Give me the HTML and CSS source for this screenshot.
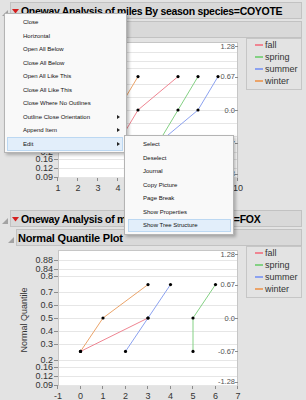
FILE: index.html
```html
<!DOCTYPE html>
<html lang="en">
<head>
    <meta charset="UTF-8">
    <title>Oneway Analysis</title>
    <link rel="stylesheet" href="styles.css">
</head>
<body>

    <div class="outline">
        <div class="outline-head">
            <svg class="disclose" width="6" height="6"><polygon points="6,0 6,6 0,6"/></svg>
            <div class="title-bar">
                <svg class="hot" width="7" height="5"><polygon points="0,0 7,0 3.5,4.5"/></svg>
                <span class="title">Oneway Analysis of miles By season species=COYOTE</span>
            </div>
        </div>
        <div class="outline-sub">
            <svg class="disclose" width="6" height="6"><polygon points="6,0 6,6 0,6"/></svg>
            <div class="title-bar sub-bar">
                <span class="title">Normal Quantile Plot</span>
            </div>
        </div>
        <div class="report">
            <svg class="chart" id="chartCoyote" width="240" height="170"></svg>
            <div class="legend">
                <div class="legend-item"><span class="swatch fall"></span>fall</div>
                <div class="legend-item"><span class="swatch spring"></span>spring</div>
                <div class="legend-item"><span class="swatch summer"></span>summer</div>
                <div class="legend-item"><span class="swatch winter"></span>winter</div>
            </div>
        </div>
    </div>

    <div class="outline">
        <div class="outline-head">
            <svg class="disclose" width="6" height="6"><polygon points="6,0 6,6 0,6"/></svg>
            <div class="title-bar">
                <svg class="hot" width="7" height="5"><polygon points="0,0 7,0 3.5,4.5"/></svg>
                <span class="title">Oneway Analysis of miles By season species=FOX</span>
            </div>
        </div>
        <div class="outline-sub">
            <svg class="disclose" width="6" height="6"><polygon points="6,0 6,6 0,6"/></svg>
            <div class="title-bar sub-bar">
                <span class="title">Normal Quantile Plot</span>
            </div>
        </div>
        <div class="report">
            <svg class="chart" id="chartFox" width="240" height="170"></svg>
            <div class="legend">
                <div class="legend-item"><span class="swatch fall"></span>fall</div>
                <div class="legend-item"><span class="swatch spring"></span>spring</div>
                <div class="legend-item"><span class="swatch summer"></span>summer</div>
                <div class="legend-item"><span class="swatch winter"></span>winter</div>
            </div>
        </div>
    </div>

    <!-- red triangle menu, opened on Edit -->
    <div class="menu main-menu">
        <div class="menu-item">Close</div>
        <div class="menu-item">Horizontal</div>
        <div class="menu-item">Open All Below</div>
        <div class="menu-item">Close All Below</div>
        <div class="menu-item">Open All Like This</div>
        <div class="menu-item">Close All Like This</div>
        <div class="menu-item">Close Where No Outlines</div>
        <div class="menu-item has-sub">Outline Close Orientation</div>
        <div class="menu-item has-sub">Append Item</div>
        <div class="menu-item has-sub active">Edit</div>
    </div>

    <div class="menu sub-menu">
        <div class="menu-item">Select</div>
        <div class="menu-item">Deselect</div>
        <div class="menu-item">Journal</div>
        <div class="menu-item">Copy Picture</div>
        <div class="menu-item">Page Break</div>
        <div class="menu-item">Show Properties</div>
        <div class="menu-item active">Show Tree Structure</div>
    </div>

    <script>
        const NS = 'http://www.w3.org/2000/svg';
        const plot = { left: 58, right: 238, top: 4, bottom: 140 };
        const zScale = 49.6;

        // left axis: probabilities at their normal quantile
        const probTicks = [
            ['0.88', 1.175], ['0.84', 0.994], ['0.8', 0.842], ['0.7', 0.524],
            ['0.6', 0.253], ['0.5', 0], ['0.4', -0.253], ['0.3', -0.524],
            ['0.2', -0.842], ['0.16', -0.994], ['0.12', -1.175], ['0.09', -1.341]
        ];
        const quantTicks = [['1.28', 1.282], ['0.67', 0.674], ['0.0', 0], ['-0.67', -0.674], ['-1.28', -1.282]];

        const colors = { fall: '#ef8592', spring: '#84d184', summer: '#8ca2f0', winter: '#eba46a' };

        function el(name, attrs, text) {
            const node = document.createElementNS(NS, name);
            for (const k in attrs) node.setAttribute(k, attrs[k]);
            if (text !== undefined) node.textContent = text;
            return node;
        }

        function drawChart(id, xMin, xMax, series) {
            const svg = document.getElementById(id);
            const mid = (plot.top + plot.bottom) / 2;
            const sx = v => plot.left + (v - xMin) * (plot.right - plot.left) / (xMax - xMin);
            const sy = z => mid - z * zScale;
            const crisp = n => Math.round(n) + 0.5;

            svg.appendChild(el('rect', {
                x: plot.left + 0.5, y: plot.top + 0.5,
                width: plot.right - plot.left - 1, height: plot.bottom - plot.top - 1,
                class: 'frame'
            }));

            probTicks.forEach(([label, z]) => {
                const y = crisp(sy(z));
                svg.appendChild(el('line', { x1: plot.left + 1, x2: plot.right - 1, y1: y, y2: y, class: 'grid' }));
                svg.appendChild(el('line', { x1: plot.left - 4, x2: plot.left, y1: y, y2: y, class: 'tick' }));
                svg.appendChild(el('text', { x: plot.left - 5, y: sy(z) + 3, class: 'ylabel' }, label));
            });

            quantTicks.forEach(([label, z]) => {
                const y = crisp(sy(z));
                svg.appendChild(el('line', { x1: plot.right - 3, x2: plot.right, y1: y, y2: y, class: 'tick' }));
                svg.appendChild(el('text', { x: plot.right - 3, y: sy(z) + 2.5, class: 'qlabel' }, label));
            });

            for (let v = xMin; v <= xMax; v++) {
                const x = crisp(sx(v)) - 1;
                svg.appendChild(el('line', { x1: x, x2: x, y1: plot.bottom, y2: plot.bottom + 3, class: 'tick' }));
                svg.appendChild(el('text', { x: sx(v), y: plot.bottom + 13, class: 'xlabel' }, v));
            }

            svg.appendChild(el('text', { x: 0, y: 0, class: 'axis-title',
                transform: 'translate(27 ' + (mid + 2) + ') rotate(-90)' }, 'Normal Quantile'));

            for (const name in series) {
                const pts = series[name].map(([v, z]) => sx(v) + ',' + sy(z)).join(' ');
                svg.appendChild(el('polyline', { points: pts, stroke: colors[name], class: 'series' }));
            }
            for (const name in series) {
                series[name].forEach(([v, z]) => {
                    svg.appendChild(el('circle', { cx: sx(v), cy: sy(z), r: 1.6, class: 'dot' }));
                });
            }
        }

        const q = 0.674;

        drawChart('chartCoyote', 1, 10, {
            fall: [[4, -q], [5, 0], [7, q]],
            spring: [[6, -q], [7, 0], [8, q]],
            summer: [[6, -q], [8, 0], [9, q]],
            winter: [[3, -q], [4, 0], [5, q]]
        });

        drawChart('chartFox', -1, 7, {
            fall: [[0, -q], [3, 0]],
            spring: [[5, -q], [5, 0], [6, q]],
            summer: [[2, -q], [3, 0], [4, q]],
            winter: [[0, -q], [1, 0], [3, q]]
        });
    </script>
</body>
</html>
```

FILE: styles.css
```css
body {
    margin: 0;
    width: 306px;
    height: 400px;
    overflow: hidden;
    background: #e3e3e3;
    font-family: 'Liberation Sans', Arial, sans-serif;
    color: #222;
}
.outline-head {
    display: flex;
    align-items: center;
    height: 17px;
    margin-top: 2px;
    padding: 0 4px 0 2px;
}
.outline-sub {
    display: flex;
    align-items: center;
    height: 17px;
    margin-top: 2px;
    padding: 0 4px 0 8px;
}
.disclose {
    flex: none;
    margin: 5px 2px 0 0;
    fill: #a3a3a3;
}
.title-bar {
    flex: 1;
    display: flex;
    align-items: center;
    height: 100%;
    box-sizing: border-box;
    background: #d9d9d9;
    border: 1px solid #c2c2c2;
    overflow: hidden;
    white-space: nowrap;
}
.hot {
    flex: none;
    margin: 1px 2px 0 1px;
    fill: #d41f1f;
}
.title {
    font-size: 10.5px;
    font-weight: bold;
    letter-spacing: -0.3px;
    color: #000;
}
.sub-bar {
    padding-left: 1px;
}
.sub-bar .title {
    font-size: 11px;
    letter-spacing: -0.2px;
}
.report {
    display: flex;
    align-items: flex-start;
}
.chart {
    display: block;
    flex: none;
    overflow: visible;
}
.chart text {
    font-family: 'Liberation Sans', Arial, sans-serif;
    font-size: 9px;
    fill: #333;
}
.chart .ylabel {
    text-anchor: end;
}
.chart .xlabel {
    text-anchor: middle;
}
.chart .qlabel {
    font-size: 7.5px;
    fill: #555;
    text-anchor: end;
}
.chart .axis-title {
    text-anchor: middle;
}
.frame {
    fill: #fff;
    stroke: #c6c6c6;
}
.grid {
    stroke: #e6e6e6;
}
.tick {
    stroke: #8c8c8c;
}
.series {
    fill: none;
    stroke-width: 1;
}
.dot {
    fill: #000;
}
.legend {
    margin-left: 6px;
    width: 56px;
    box-sizing: border-box;
    padding-bottom: 2px;
    border: 1px solid #c6c6c6;
}
.legend-item {
    display: flex;
    align-items: center;
    height: 12px;
    font-size: 9px;
    color: #333;
}
.swatch {
    width: 8px;
    height: 2px;
    margin: 0 2px 0 8px;
}
.swatch.fall { background: #ef8592; }
.swatch.spring { background: #84d184; }
.swatch.summer { background: #8ca2f0; }
.swatch.winter { background: #eba46a; }
/* popup menus */
.menu {
    position: absolute;
    box-sizing: border-box;
    padding: 1.5px 0;
    background: #f9f9f9;
    border: 1px solid #b4b4b4;
    box-shadow: 2px 2px 3px rgba(0, 0, 0, 0.25);
    font-size: 6px;
    color: #111;
}
.main-menu {
    left: 4px;
    top: 13px;
    width: 123px;
}
.sub-menu {
    left: 124px;
    top: 135px;
    width: 110px;
}
.menu-item {
    display: flex;
    align-items: center;
    justify-content: space-between;
    box-sizing: border-box;
    height: 13.5px;
    white-space: nowrap;
    border: 1px solid transparent;
}
.main-menu .menu-item {
    margin: 0 3px 0 2px;
    padding: 0 2px 0 15px;
}
.sub-menu .menu-item {
    margin: 0 2px 0 3px;
    padding: 0 2px 0 14px;
}
.has-sub::after {
    content: "";
    border-left: 3px solid #222;
    border-top: 2px solid transparent;
    border-bottom: 2px solid transparent;
}
.menu-item.active {
    background: #e2eefa;
    border-color: #bcd8f2;
}
```
